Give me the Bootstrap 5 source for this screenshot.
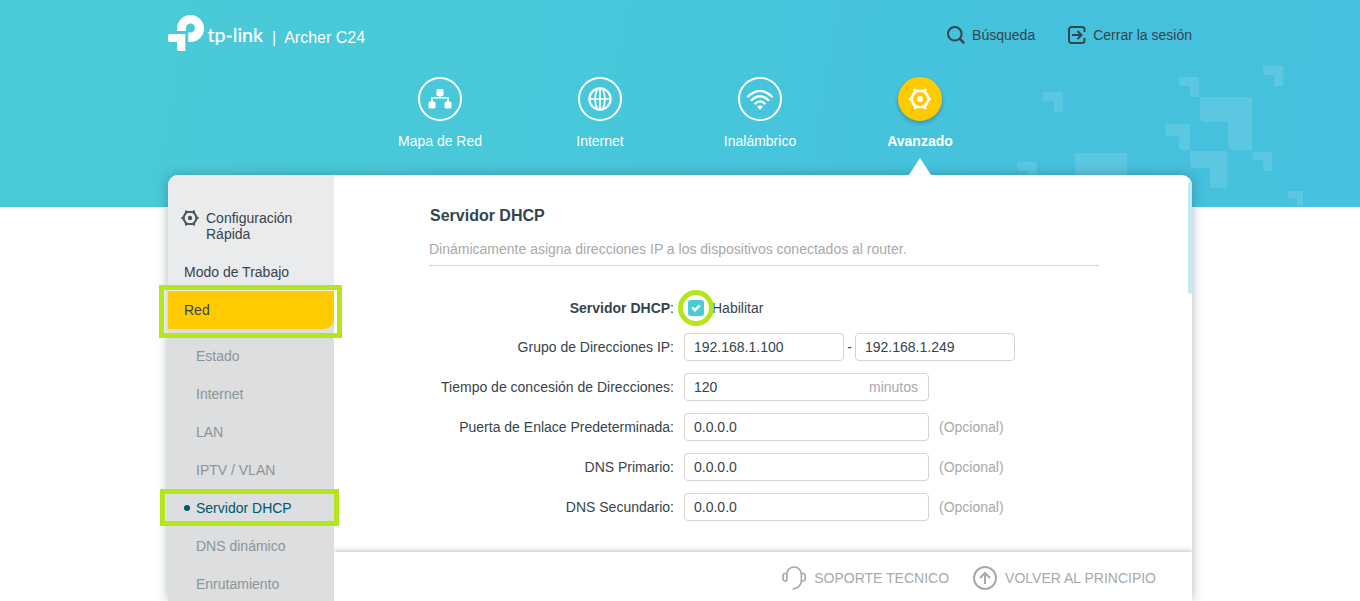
<!DOCTYPE html>
<html lang="es">
<head>
<meta charset="utf-8">
<meta name="viewport" content="width=device-width, initial-scale=1">
<title>Archer C24</title>
<link rel="stylesheet" href="https://cdn.jsdelivr.net/npm/bootstrap@5.3.0/dist/css/bootstrap.min.css">
<style>
  body {
    font: 14px/16px "Liberation Sans", Arial, sans-serif;
    color: #36444b;
    background: #fff linear-gradient(100deg, #4acbd6 0%, #48c8da 40%, #45c1dd 75%, #45c0de 100%) no-repeat 0 0 / 100% 207px;
    height: 601px;
  }
  a { color: inherit; text-decoration: none; }
  svg { display: block; flex: none; }
  .pixels { z-index: 0; }
  .shell { width: 1024px; height: 601px; z-index: 1; }
  .topbar { height: 77px; }
  .model { font-size: 16px; line-height: 20px; }
  .model span { margin-top: 28px; }
  .bar { margin-left: 4px; margin-right: 8px; }
  .tools { height: 70px; }
  .tools svg { margin-right: 7px; }
  .search { margin-right: 33px; }
  .tabs { height: 98px; }
  .tab { width: 160px; color: #fff; }
  .disc { width: 44px; height: 44px; border: 2px solid #fff; }
  .tab.on { font-weight: bold; }
  .tab.on .disc { background: #ffcb00; border-color: #ffcb00; box-shadow: 0 2px 4px rgba(0,0,0,.25); }
  .pointer { border: 11px solid transparent; border-top: 0; border-bottom: 17px solid #fff; left: 69px; bottom: 0; z-index: 2; }
  .panel { min-height: 0; border-radius: 10px 10px 0 0; box-shadow: 0 0 12px rgba(40,60,70,.36); }
  .side { width: 166px; background: #eaebed; border-top-left-radius: 10px; }
  .side-item { height: 38px; padding-left: 16px; }
  .quick { height: 78px; padding: 35px 0 0 13px; }
  .quick span { margin-left: 7px; }
  .group { background: #dcdee0; }
  .current { background: #ffcb00; border-bottom-right-radius: 10px; }
  .sub { height: 38px; padding-left: 28px; color: #8c9498; }
  .sub.on { color: #00566a; }
  .dot { width: 6px; height: 6px; background: #00566a; left: 16px; top: 16px; }
  .mark-frame { border: 5px solid #b5e61d; pointer-events: none; z-index: 3; }
  .frame-red { left: -9px; right: -8px; top: -6px; bottom: -9px; }
  .frame-dhcp { left: -8px; right: -5px; top: 0; bottom: 1px; }
  .frame-check { left: -6px; top: -10px; width: 36px; height: 36px; }
  .main-area { padding: 32px 93px 0 95px; min-height: 0; }
  .main-area h1 { font-size: 16px; line-height: 18px; font-weight: bold; margin: 0 0 16px 1px; }
  .intro { color: #a7a9ac; padding-bottom: 8px; border-bottom: 1px solid #d4d4d4; margin-bottom: 34px; }
  .line { height: 28px; margin-bottom: 12px; }
  .line.first { height: 16px; margin-bottom: 17px; }
  .cap { width: 245px; margin-right: 10px; }
  .enable { padding-left: 4px; }
  .field { width: 245px; height: 28px; border: 1px solid #d4d4d4; border-radius: 4px; padding: 0 10px 0 9px; background: #fff; }
  .field.half { width: 160px; }
  .dash { width: 11px; }
  .tick { width: 16px; height: 16px; border-radius: 3px; background: #4acbd6; }
  .soft { color: #a7a9ac; }
  .hint { margin-left: 10px; }
  .foot { height: 49px; padding: 3px 36px 0 0; color: #a7a9ac; box-shadow: 0 -1px 5px rgba(50,60,65,.32); clip-path: inset(-8px 0 0 0); }
  .foot span { margin-top: -1px; }
  .thumb { width: 4px; height: 112px; top: 7px; right: 0; border-radius: 2px; background: #bdecf2; }
</style>
</head>
<body class="m-0 position-relative overflow-hidden">
<svg class="pixels position-absolute top-0 start-0" width="1360" height="207" fill="#fff" fill-opacity=".12" aria-hidden="true">
  <path d="M1043 92h20v20h-9v-11h-10l-1-1zM1179 77h20v20h-9V86h-10l-1-1zM1263 66h20v20h-9V75h-10l-1-1zM1017 162h20v20h-9v-11h-10l-1-1z"/>
  <path d="M1165 124h25v26h-9l-2-2v-12h-12l-2-2zM1200 97h52v53h-21l-3-3v-25h-25l-3-3zM1190 151h37v37h-15l-2-2v-18h-18l-2-2zM1253 152h19v19h-8l-1-1v-10h-9l-1-1zM1288 191h15v15h-6v-8h-8l-1-1zM1075 153h52v54h-52z"/>
</svg>
<div class="shell mx-auto position-relative d-flex flex-column">
  <header class="topbar d-flex flex-shrink-0 justify-content-between">
    <div class="d-flex text-white">
      <svg width="100" height="60" fill="#fff" role="img" aria-label="tp-link">
        <path d="M9 31V28.500A13.500 13.500 0 1 1 22.500 42H20.300V32.500h2.200a4.500 4.500 0 1 0-4.500-4.500v3z"/>
        <path d="M2 34h15.300v17h-6.300a2 2 0 0 1-2-2v-7H2a2 2 0 0 1-2-2v-4a2 2 0 0 1 2-2z"/>
        <text x="39.500" y="42" font-family="Lato, sans-serif" font-size="19.500" stroke="#fff" stroke-width=".2" textLength="55.500" lengthAdjust="spacingAndGlyphs">tp-link</text>
      </svg>
      <div class="model d-flex"><span class="bar">|</span><span>Archer C24</span></div>
    </div>
    <div class="tools d-flex align-items-center">
      <a href="#" class="search d-flex align-items-center">
        <svg width="18" height="18" viewBox="0 0 18 18" fill="none" stroke="#36444b" stroke-width="2"><circle cx="7.800" cy="7.800" r="6.800"/><path d="M12.700 12.700l4.500 4.500" stroke-width="2.500"/></svg>
        <span>Búsqueda</span>
      </a>
      <a href="#" class="d-flex align-items-center">
        <svg width="18" height="18" viewBox="0 0 18 18" fill="none" stroke="#36444b" stroke-width="2"><path d="M16.500 6V3.500A2.500 2.500 0 0 0 14 1H3.500A2.500 2.500 0 0 0 1 3.500v11A2.500 2.500 0 0 0 3.500 17H14a2.500 2.500 0 0 0 2.500-2.500V12M4 9h9.500M9.500 5L13.500 9l-4 4"/></svg>
        <span>Cerrar la sesión</span>
      </a>
    </div>
  </header>
  <nav class="tabs d-flex flex-shrink-0 justify-content-center">
    <a href="#" class="tab d-flex flex-column align-items-center">
      <span class="disc rounded-circle d-flex align-items-center justify-content-center mb-2">
        <svg width="24" height="22" viewBox="0 0 24 22" fill="#fff"><rect x="8.500" y="1" width="7" height="7" rx="1.500"/><rect x=".5" y="13.500" width="7" height="7" rx="1.500"/><rect x="16.500" y="13.500" width="7" height="7" rx="1.500"/><path d="M12 7v3M4 14v-4.300h16V14" fill="none" stroke="#fff" stroke-width="1.600"/></svg>
      </span><span class="mt-1">Mapa de Red</span>
    </a>
    <a href="#" class="tab d-flex flex-column align-items-center">
      <span class="disc rounded-circle d-flex align-items-center justify-content-center mb-2">
        <svg width="24" height="24" viewBox="0 0 24 24" fill="none" stroke="#fff" stroke-width="1.700"><circle cx="12" cy="12" r="10.600" stroke-width="2.200"/><path d="M1 12h22M12 1v22M9.500 1.500C6.500 8 6.500 16 9.500 22.500M14.500 1.500C17.500 8 17.500 16 14.500 22.500"/></svg>
      </span><span class="mt-1">Internet</span>
    </a>
    <a href="#" class="tab d-flex flex-column align-items-center">
      <span class="disc rounded-circle d-flex align-items-center justify-content-center mb-2">
        <svg width="28" height="22" viewBox="0 0 28 22" fill="none" stroke="#fff" stroke-width="2.300"><path d="M1.300 9.300Q14-3.500 26.700 9.300M5 12.800Q14 3.800 23 12.800M8.700 16.200Q14 10.700 19.300 16.200"/><path d="M11 18.500q3-2 6 0L14 22z" fill="#fff" stroke="none"/></svg>
      </span><span class="mt-1">Inalámbrico</span>
    </a>
    <a href="#" class="tab on position-relative d-flex flex-column align-items-center">
      <span class="disc rounded-circle d-flex align-items-center justify-content-center mb-2">
        <svg width="24" height="24" viewBox="0 0 24 24" fill="none" stroke="#fff"><path d="M7.300 3.900h9.400L21.300 12l-4.600 8.100H7.300L2.700 12z" stroke-width="2.400" stroke-linejoin="round"/><circle cx="12" cy="12" r="7.800" stroke-width="1.400"/><path d="M6.800 2.900v.01M17.200 2.900v.01M22.200 12v.01M17.200 21.100v.01M6.800 21.100v.01M1.800 12v.01" stroke-width="2.600" stroke-linecap="round"/><circle cx="12" cy="12" r="3" fill="#fff" stroke="none"/></svg>
      </span><span class="mt-1">Avanzado</span>
      <span class="pointer position-absolute"></span>
    </a>
  </nav>
  <div class="panel position-relative bg-white d-flex flex-grow-1">
    <aside class="side d-flex flex-column flex-shrink-0">
      <a href="#" class="quick d-flex flex-shrink-0 align-items-start">
        <svg width="18" height="16" viewBox="0 0 18 16" fill="none" stroke="#4b585e"><path d="M5.300 1.900h7.400L16.200 8l-3.500 6.100H5.300L1.800 8z" stroke-width="1.900" stroke-linejoin="round"/><circle cx="9" cy="8" r="5.800" stroke-width="1"/><path d="M5 1.300v.01M13 1.300v.01M16.800 8v.01M13 14.700v.01M5 14.700v.01M1.200 8v.01" stroke-width="2.200" stroke-linecap="round"/><circle cx="9" cy="8" r="2.200" fill="#4b585e" stroke="none"/></svg>
        <span>Configuración Rápida</span>
      </a>
      <a href="#" class="side-item d-flex flex-shrink-0 align-items-center">Modo de Trabajo</a>
      <div class="group flex-grow-1">
        <a href="#" class="side-item current position-relative d-flex align-items-center">Red<span class="mark-frame frame-red position-absolute"></span></a>
        <nav class="pt-2">
          <a href="#" class="sub d-flex align-items-center">Estado</a>
          <a href="#" class="sub d-flex align-items-center">Internet</a>
          <a href="#" class="sub d-flex align-items-center">LAN</a>
          <a href="#" class="sub d-flex align-items-center">IPTV / VLAN</a>
          <a href="#" class="sub on position-relative d-flex align-items-center"><span class="dot rounded-circle position-absolute"></span>Servidor DHCP<span class="mark-frame frame-dhcp position-absolute"></span></a>
          <a href="#" class="sub d-flex align-items-center">DNS dinámico</a>
          <a href="#" class="sub d-flex align-items-center">Enrutamiento</a>
        </nav>
      </div>
    </aside>
    <div class="d-flex flex-column flex-grow-1">
      <main class="main-area flex-grow-1">
        <h1>Servidor DHCP</h1>
        <div class="intro">Dinámicamente asigna direcciones IP a los dispositivos conectados al router.</div>
        <div class="line first d-flex align-items-center">
          <div class="cap text-end"><b>Servidor DHCP</b>:</div>
          <div class="enable position-relative d-flex align-items-center">
            <span class="tick"><svg width="16" height="16" fill="none" stroke="#fff" stroke-width="2.400"><path d="M4.300 7.500L7 10.200l4.800-4.800"/></svg></span>
            <span class="mark-frame frame-check rounded-circle position-absolute"></span>
            <span class="ms-2">Habilitar</span>
          </div>
        </div>
        <div class="line d-flex align-items-center">
          <div class="cap text-end">Grupo de Direcciones IP:</div>
          <div class="field half d-flex align-items-center">192.168.1.100</div><span class="dash text-center">-</span><div class="field half d-flex align-items-center">192.168.1.249</div>
        </div>
        <div class="line d-flex align-items-center">
          <div class="cap text-end">Tiempo de concesión de Direcciones:</div>
          <div class="field d-flex align-items-center justify-content-between"><span>120</span><span class="soft">minutos</span></div>
        </div>
        <div class="line d-flex align-items-center">
          <div class="cap text-end">Puerta de Enlace Predeterminada:</div>
          <div class="field d-flex align-items-center">0.0.0.0</div><span class="soft hint">(Opcional)</span>
        </div>
        <div class="line d-flex align-items-center">
          <div class="cap text-end">DNS Primario:</div>
          <div class="field d-flex align-items-center">0.0.0.0</div><span class="soft hint">(Opcional)</span>
        </div>
        <div class="line d-flex align-items-center">
          <div class="cap text-end">DNS Secundario:</div>
          <div class="field d-flex align-items-center">0.0.0.0</div><span class="soft hint">(Opcional)</span>
        </div>
      </main>
      <footer class="foot d-flex flex-shrink-0 align-items-center justify-content-end bg-white">
        <a href="#" class="d-flex align-items-center me-4">
          <svg class="me-2" width="24" height="24" viewBox="0 0 24 24" fill="none" stroke="#a7a9ac" stroke-width="1.700"><path d="M4.800 15V8.500a7.300 7.500 0 0 1 14.600 0V14c0 5-3.400 9-8.900 9M4.800 7.500H2.300L1 9v4.500L2.300 15h2.500M19.400 7.500h2.500L23.200 9v4.500L21.900 15h-2.500"/></svg>
          <span>SOPORTE TECNICO</span>
        </a>
        <a href="#" class="d-flex align-items-center">
          <svg class="me-2" width="24" height="24" viewBox="0 0 24 24" fill="none" stroke="#a7a9ac" stroke-width="2"><circle cx="12" cy="12" r="11"/><path d="M12 18V7M7 12l5-5 5 5"/></svg>
          <span>VOLVER AL PRINCIPIO</span>
        </a>
      </footer>
    </div>
    <span class="thumb position-absolute"></span>
  </div>
</div>
<script src="https://cdn.jsdelivr.net/npm/bootstrap@5.3.0/dist/js/bootstrap.bundle.min.js"></script>
</body>
</html>
